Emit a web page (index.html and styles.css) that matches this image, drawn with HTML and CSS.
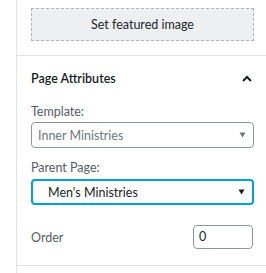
FILE: index.html
```html
<!DOCTYPE html>
<html lang="en">
    <head>
        <meta charset="UTF-8" />
        <title>Page Attributes</title>
        <link rel="stylesheet" href="styles.css">
    </head>
    <body>
        <div class="sidebar">
            <div class="panel featured">
                <div class="featured-btn">Set featured image</div>
            </div>
            <div class="panel attrs">
                <div class="panel-head">
                    <span class="panel-title">Page Attributes</span>
                    <svg class="chevron" width="10" height="7" viewBox="0 0 10 7">
                        <polyline points="1,6 5,2 9,6" fill="none" stroke="#191e23" stroke-width="2"/>
                    </svg>
                </div>
                <div class="field-label">Template:</div>
                <div class="select">
                    <span>Inner Ministries</span>
                    <svg class="arrow" width="7" height="6" viewBox="0 0 7 6"><polygon points="0.5,0.5 6.5,0.5 3.5,5.5" fill="#6c7781"/></svg>
                </div>
                <div class="field-label parent">Parent Page:</div>
                <div class="select focus">
                    <span>Men's Ministries</span>
                    <svg class="arrow" width="7" height="6" viewBox="0 0 7 6"><polygon points="0.5,0.5 6.5,0.5 3.5,5.5" fill="#191e23"/></svg>
                </div>
                <div class="order-row">
                    <span class="order-label">Order</span>
                    <div class="order-input">0</div>
                </div>
            </div>
        </div>
    </body>
</html>
```
FILE: styles.css
```css
body {
    margin: 0;
    background: #fff;
    font-family: Lato, sans-serif;
    font-size: 12.5px;
    color: #191e23;
}

.sidebar {
    margin-left: 16px;
    border-left: 1px solid #e2e4e7;
    height: 273px;
}

.panel {
    padding: 0 12px 0 14px;
    border-bottom: 1px solid #e2e4e7;
}

.featured {
    padding-top: 8px;
    padding-bottom: 14px;
}

.featured-btn {
    height: 31px;
    border: 1px dashed #b0b5ba;
    background: #edeff0;
    display: flex;
    align-items: center;
    justify-content: center;
    color: #23282d;
}

.attrs {
    padding-bottom: 16px;
}

.panel-head {
    height: 44px;
    display: flex;
    align-items: center;
    justify-content: space-between;
}

.panel-title {
    font-weight: 600;
}

.chevron {
    margin-right: 2px;
}

.field-label {
    line-height: 18px;
    margin-top: 3px;
    color: #555d66;
}

.field-label.parent {
    margin-top: 11px;
}

.select {
    margin-top: 1px;
    height: 24px;
    border: 1px solid #8d96a0;
    border-radius: 4px;
    display: flex;
    align-items: center;
    justify-content: space-between;
    padding: 0 7px 0 6px;
    color: #6c7781;
}

.select.focus {
    margin-top: 2px;
    height: 22px;
    border: 2px solid #00a0d2;
    padding-left: 15px;
    color: #191e23;
}

.order-row {
    margin-top: 20px;
    display: flex;
    align-items: center;
    justify-content: space-between;
}

.order-label {
    color: #555d66;
}

.order-input {
    width: 53px;
    height: 22px;
    border: 1px solid #8d96a0;
    border-radius: 4px;
    padding-left: 5px;
    line-height: 22px;
    margin-right: 1px;
}
```
